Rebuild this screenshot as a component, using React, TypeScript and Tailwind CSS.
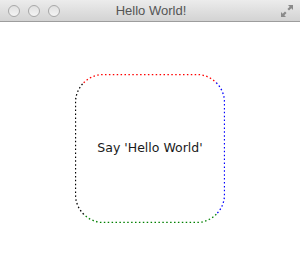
import React from 'react';

const App: React.FC = () => {
  return (
    <div className="w-[300px] h-[272px] bg-white flex flex-col" style={{ fontFamily: '"Liberation Sans", Arial, sans-serif' }}>
      {/* Title bar */}
      <div className="h-[22px] flex items-center px-[8px] bg-gradient-to-b from-[#ececec] to-[#d3d3d3] border-b border-[#9d9d9d]">
        <div className="flex gap-[8px]">
          <span className="w-[12px] h-[12px] rounded-full border border-[#a8a8a8] bg-gradient-to-b from-[#e0e0e0] to-[#f4f4f4]" />
          <span className="w-[12px] h-[12px] rounded-full border border-[#a8a8a8] bg-gradient-to-b from-[#e0e0e0] to-[#f4f4f4]" />
          <span className="w-[12px] h-[12px] rounded-full border border-[#a8a8a8] bg-gradient-to-b from-[#e0e0e0] to-[#f4f4f4]" />
        </div>
        <div className="flex-1 text-center text-[13px] text-[#555555] pr-[38px]">Hello World!</div>
        <svg width="14" height="14" viewBox="0 0 14 14" className="mr-[-2px]">
          <path d="M8 1h5v5l-1.7-1.7L9 6.6 7.4 5 9.7 2.7z" fill="#8a8a8a" />
          <path d="M6 13H1V8l1.7 1.7L5 7.4 6.6 9 4.3 11.3z" fill="#8a8a8a" />
        </svg>
      </div>

      {/* Content */}
      <div className="flex-1 flex items-center justify-center">
        <div className="relative w-[150px] h-[149px] mt-[3px] flex items-center justify-center">
          <svg width="150" height="149" viewBox="0 0 150 149" className="absolute inset-0" fill="none" strokeWidth="1.3" strokeDasharray="1.5 2.4">
            <path d="M8.7 8.7A28 28 0 0 1 28.5 0.5H121.5A28 28 0 0 1 141.3 8.7" stroke="#ff0000" />
            <path d="M141.3 8.7A28 28 0 0 1 149.5 28.5V120.5A28 28 0 0 1 141.3 140.3" stroke="#0000ff" />
            <path d="M141.3 140.3A28 28 0 0 1 121.5 148.5H28.5A28 28 0 0 1 8.7 140.3" stroke="#008000" />
            <path d="M8.7 140.3A28 28 0 0 1 0.5 120.5V28.5A28 28 0 0 1 8.7 8.7" stroke="#000000" />
          </svg>
          <span className="text-[#1a1a1a]" style={{ fontFamily: '"DejaVu Sans", sans-serif', fontSize: '12.5px' }}>Say 'Hello World'</span>
        </div>
      </div>
    </div>
  );
};

export default App;
